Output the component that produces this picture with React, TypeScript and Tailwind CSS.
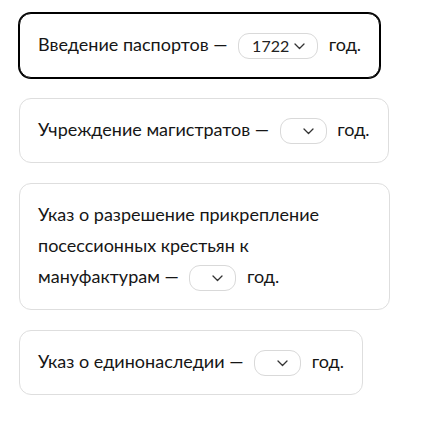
type Item = { text: string; value?: string; active?: boolean };

const items: Item[] = [
  { text: "Введение паспортов —", value: "1722", active: true },
  { text: "Учреждение магистратов —" },
  { text: "Указ о разрешение прикрепление посессионных крестьян к мануфактурам —" },
  { text: "Указ о единонаследии —" },
];

function Chevron() {
  return (
    <svg viewBox="0 0 11 7" className="h-[7px] w-[11px]" aria-hidden="true">
      <polyline
        points="1,1 5.5,5.5 10,1"
        fill="none"
        stroke="#333"
        strokeWidth="1.3"
        strokeLinecap="round"
        strokeLinejoin="round"
      />
    </svg>
  );
}

function Select({ value }: { value?: string }) {
  return (
    <span className="mx-[6px] inline-flex h-[26px] items-center gap-[5px] rounded-[11px] border border-[#d9d9d9] bg-white pl-[13px] pr-[12px] align-middle text-[16px] leading-none text-[#222]">
      {value ? <span>{value}</span> : <span className="w-[4px]" />}
      <Chevron />
    </span>
  );
}

export default function App() {
  return (
    <div
      className="flex min-h-[422px] flex-col items-start gap-[20px] bg-white px-[19px] pt-[13px]"
      style={{ fontFamily: '"Lato", "Noto Sans", sans-serif' }}
    >
      {items.map((it) => (
        <div
          key={it.text}
          className={
            "max-w-[371px] rounded-[12px] border bg-white px-[18px] pt-[15px] pb-[17px] text-[18px] leading-[31px] text-[#161616] " +
            (it.active ? "border-black ring-1 ring-black" : "border-[#dedede]")
          }
        >
          {it.text} <Select value={it.value} /> год.
        </div>
      ))}
    </div>
  );
}
